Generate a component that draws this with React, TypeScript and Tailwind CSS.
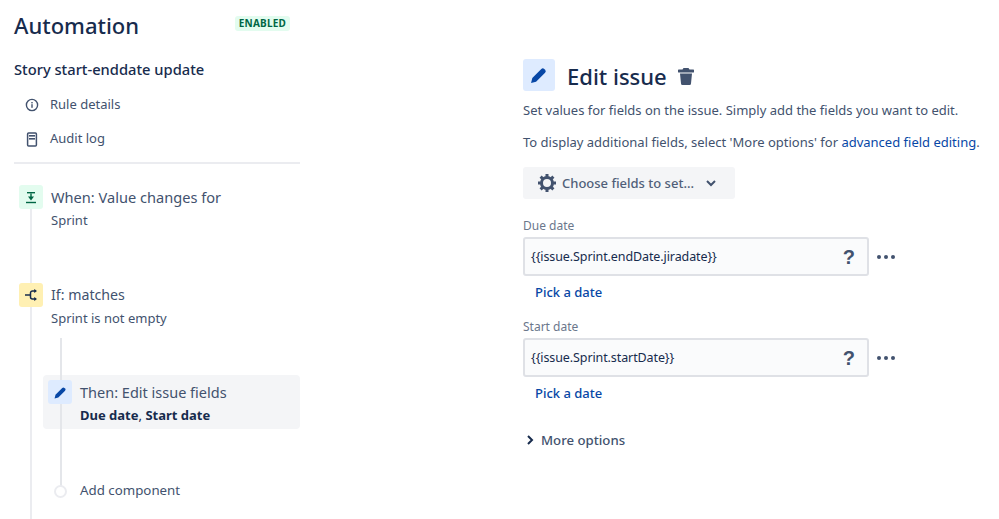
import type { ReactNode } from 'react';

const font = { fontFamily: '"Noto Sans", sans-serif' };

function PencilIcon({ size }: { size: number }) {
  return (
    <svg width={size} height={size} viewBox="0 0 24 24" fill="#0747a6">
      <path d="M2.500 21.500l1.500-6L14.800 4.700a2.500 2.500 0 0 1 3.500 0l1 1a2.500 2.500 0 0 1 0 3.500L8.500 20z" />
    </svg>
  );
}

function NavItem({ icon, label }: { icon: ReactNode; label: string }) {
  return (
    <div className="flex h-[34px] items-center">
      <div className="flex w-[36px] justify-center">{icon}</div>
      <span className="text-[13px] text-[#42526e]">{label}</span>
    </div>
  );
}

function StepIcon({ color, children }: { color: string; children: ReactNode }) {
  return <div className={`z-10 flex h-6 w-6 shrink-0 items-center justify-center rounded-[3px] ${color}`}>{children}</div>;
}

function DateField({ label, value }: { label: string; value: string }) {
  return (
    <div>
      <div className="text-[12px] leading-[16px] text-[#6b778c]">{label}</div>
      <div className="mt-[3px] flex items-center">
        <div className="flex h-[39px] w-[346px] items-center justify-between rounded-[3px] border-2 border-[#dfe1e6] bg-[#fafbfc] pl-[6px] pr-[12px]">
          <span className="mt-[2px] text-[12.5px] tracking-[-0.1px] text-[#172b4d]">{value}</span>
          <span className="text-[20px] font-bold leading-none text-[#42526e]" style={{ fontFamily: '"Liberation Sans", sans-serif' }}>?</span>
        </div>
        <div className="ml-[8px] flex gap-[3px]">
          <span className="h-[4px] w-[4px] rounded-full bg-[#42526e]" />
          <span className="h-[4px] w-[4px] rounded-full bg-[#42526e]" />
          <span className="h-[4px] w-[4px] rounded-full bg-[#42526e]" />
        </div>
      </div>
      <div className="mt-[6px] pl-[12px] text-[13px] font-medium leading-[20px] text-[#0747a6]">Pick a date</div>
    </div>
  );
}

export default function App() {
  return (
    <div className="flex h-[519px] w-[999px] overflow-hidden bg-white" style={font}>
      {/* Left sidebar */}
      <div className="relative w-[300px] shrink-0 pl-[14px]">
        <div className="flex h-[50px] items-center justify-between pr-[10px]">
          <h1 className="text-[22px] font-medium leading-[28px] text-[#172b4d]">Automation</h1>
          <span className="mb-[4px] rounded-[3px] bg-[#e3fcef] px-[4px] text-[10px] font-bold leading-[15px] tracking-[0.2px] text-[#006644]">ENABLED</span>
        </div>
        <div className="mt-[9px] text-[14.7px] font-medium leading-[20px] text-[#172b4d]">Story start-enddate update</div>
        <div className="mt-[9px]">
          <NavItem
            label="Rule details"
            icon={
              <svg width="14" height="14" viewBox="0 0 14 14" fill="none">
                <circle cx="7" cy="7" r="5.6" stroke="#42526e" strokeWidth="1.4" />
                <rect x="6.3" y="6.2" width="1.4" height="3.6" fill="#42526e" />
                <rect x="6.3" y="4" width="1.4" height="1.4" fill="#42526e" />
              </svg>
            }
          />
          <NavItem
            label="Audit log"
            icon={
              <svg width="12" height="15" viewBox="0 0 12 15" fill="none">
                <rect x="1.6" y="1" width="8.8" height="13" rx="1" stroke="#42526e" strokeWidth="1.5" />
                <rect x="3" y="3" width="6" height="1.6" fill="#42526e" />
                <rect x="3" y="6" width="6" height="1.6" fill="#42526e" />
              </svg>
            }
          />
        </div>
        <div className="mt-[6px] h-[2px] bg-[#ebecf0]" />

        {/* Rule timeline */}
        <div className="relative pl-[5px] pt-[21px]">
          <div className="absolute bottom-[-200px] left-[16px] top-[30px] w-[2px] bg-[#ebecf0]" />
          <div className="flex gap-[8px]">
            <StepIcon color="bg-[#e3fcef]">
              <svg width="12" height="13" viewBox="0 0 12 13" fill="#064">
                <rect x="2" y="1" width="8" height="1.4" />
                <rect x="1" y="10.8" width="10" height="1.4" />
                <rect x="5.3" y="2.4" width="1.4" height="4" />
                <path d="M3 5.6h6L6 9.4z" />
              </svg>
            </StepIcon>
            <div>
              <div className="text-[14.6px] leading-[24px] text-[#42526e]">When: Value changes for</div>
              <div className="mt-[1px] text-[13px] leading-[20px] text-[#42526e]">Sprint</div>
            </div>
          </div>
          <div className="mt-[53px] flex gap-[8px]">
            <StepIcon color="bg-[#fff0b3]">
              <svg width="14" height="12" viewBox="0 0 14 12" fill="none" stroke="#172b4d" strokeWidth="1.5">
                <path d="M1 6h5M12 2H8.500a2 2 0 0 0-2 2v4a2 2 0 0 0 2 2H12" />
                <path d="M10.500 0.500v3l2-1.500zM10.500 8.500v3l2-1.500z" fill="#172b4d" strokeWidth="0.6" />
              </svg>
            </StepIcon>
            <div>
              <div className="text-[14.2px] leading-[24px] text-[#42526e]">If: matches</div>
              <div className="mt-[1px] text-[13px] leading-[20px] text-[#42526e]">Sprint is not empty</div>
            </div>
          </div>

          {/* Nested branch */}
          <div className="relative ml-[24px] mt-[47px]">
            <div className="absolute bottom-[6px] left-[17px] top-[-37px] z-[1] w-[2px] bg-[#e4e6ea]" />
            <div className="flex h-[54px] gap-[8px] rounded-[4px] bg-[#f4f5f7] pl-[5px] pt-[5px]">
              <StepIcon color="bg-[#deebff]">
                <PencilIcon size={15} />
              </StepIcon>
              <div>
                <div className="mt-[2px] text-[14.5px] leading-[20px] text-[#42526e]">Then: Edit issue fields</div>
                <div className="mt-[3px] text-[13px] leading-[20px] text-[#172b4d]">
                  <b>Due date</b>, <b>Start date</b>
                </div>
              </div>
            </div>
            <div className="relative z-10 mt-[52px] flex h-[20px] items-center gap-[13px] pl-[11px]">
              <span className="h-[13px] w-[13px] rounded-full border-2 border-[#ebecf0] bg-white" />
              <span className="text-[13.3px] text-[#42526e]">Add component</span>
            </div>
          </div>
        </div>
      </div>

      {/* Edit panel */}
      <div className="ml-[223px] flex-1 pt-[59px]">
        <div className="flex items-start">
          <div className="flex h-[32px] w-[32px] items-center justify-center rounded-[3px] bg-[#deebff]">
            <PencilIcon size={20} />
          </div>
          <h2 className="ml-[12px] mt-[1px] text-[22px] font-medium leading-[32px] text-[#172b4d]">Edit issue</h2>
          <svg className="ml-[11px] mt-[9px]" width="16" height="17" viewBox="0 0 16 17" fill="#42526e">
            <path d="M5.500 0h5l1 1.500H15a1 1 0 0 1 0 3H1a1 1 0 0 1 0-3h3.500z" />
            <path d="M2 5.500h12l-1 10a1.500 1.500 0 0 1-1.500 1.500h-7A1.500 1.500 0 0 1 3 15.500z" />
          </svg>
        </div>
        <p className="mt-[8px] whitespace-nowrap text-[13px] leading-[20px] text-[#42526e]">Set values for fields on the issue. Simply add the fields you want to edit.</p>
        <p className="mt-[12px] whitespace-nowrap text-[13px] leading-[20px] text-[#42526e]">
          To display additional fields, select 'More options' for <span className="text-[#0747a6]">advanced field editing</span>.
        </p>
        <div className="mt-[15px] flex h-[32px] w-[212px] items-center rounded-[3px] bg-[#f4f5f7] pl-[14px]">
          <svg width="20" height="20" viewBox="0 0 20 20" fill="none">
            <circle cx="10" cy="10" r="5.500" stroke="#42526e" strokeWidth="3" />
            <path d="M10 1v3M10 16v3M1 10h3M16 10h3M3.600 3.600l2.200 2.200M14.200 14.200l2.200 2.200M3.600 16.400l2.200-2.200M14.200 5.800l2.200-2.200" stroke="#42526e" strokeWidth="3" />
          </svg>
          <span className="ml-[5px] mt-[2px] text-[13px] font-medium text-[#505f79]">Choose fields to set...</span>
          <svg className="ml-[12px]" width="10" height="7" viewBox="0 0 10 7" fill="none" stroke="#42526e" strokeWidth="2">
            <path d="M1 1l4 4 4-4" />
          </svg>
        </div>
        <div className="mt-[19px]">
          <DateField label="Due date" value="{{issue.Sprint.endDate.jiradate}}" />
        </div>
        <div className="mt-[17px]">
          <DateField label="Start date" value="{{issue.Sprint.startDate}}" />
        </div>
        <div className="mt-[27px] flex items-center pl-[4px]">
          <svg width="7" height="10" viewBox="0 0 7 10" fill="none" stroke="#172b4d" strokeWidth="2">
            <path d="M1 1l4 4-4 4" />
          </svg>
          <span className="ml-[7px] text-[13.2px] font-medium leading-[20px] text-[#42526e]">More options</span>
        </div>
      </div>
    </div>
  );
}
